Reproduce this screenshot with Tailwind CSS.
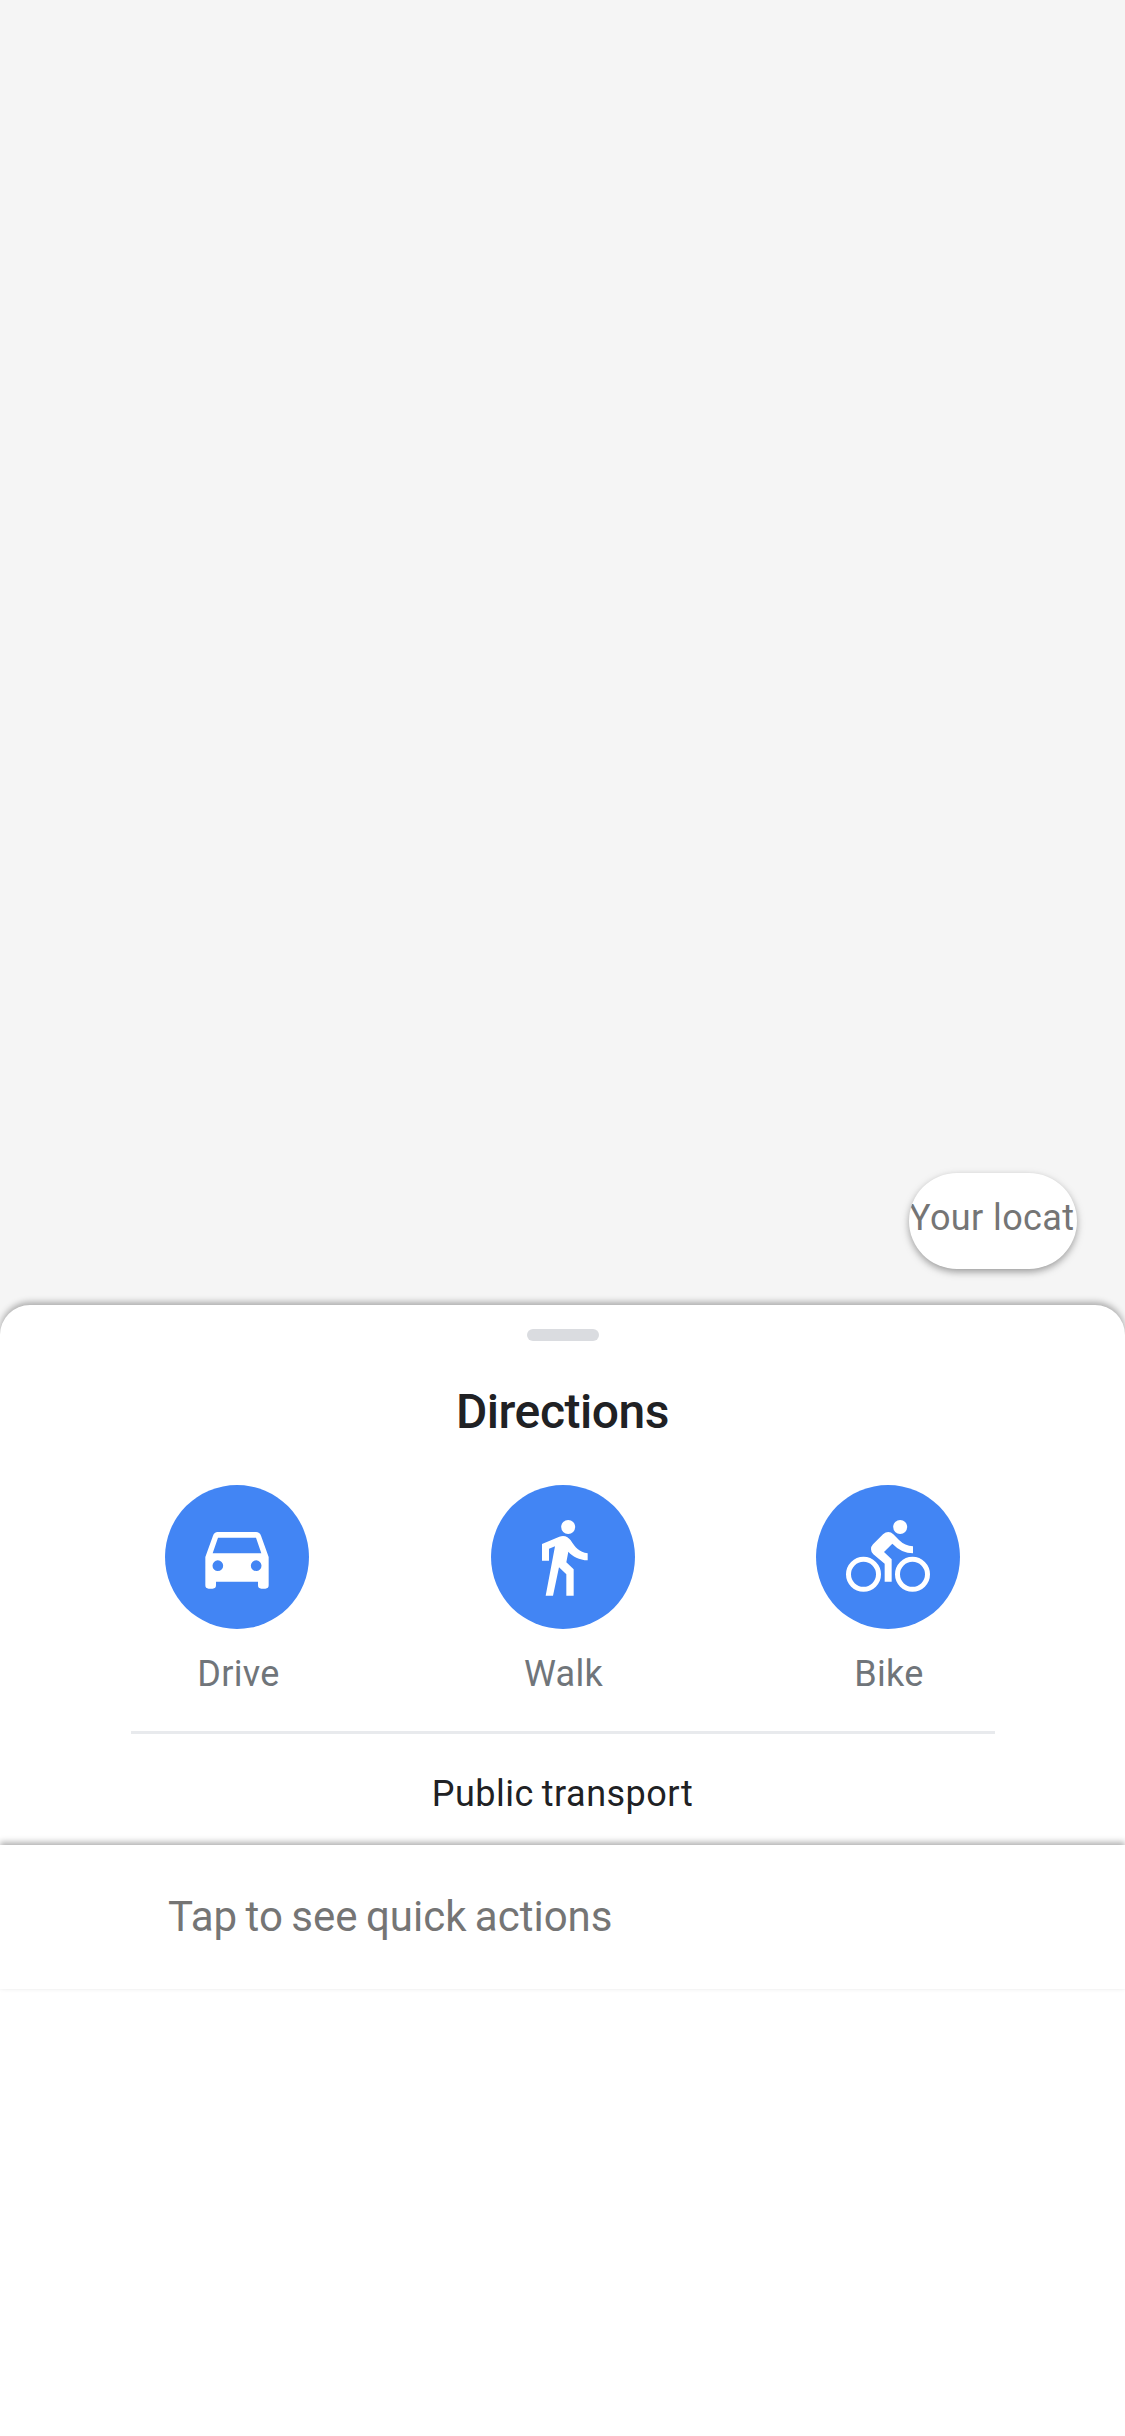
<!DOCTYPE html>
<html lang="en">
<head>
<meta charset="utf-8">
<title>Directions</title>
<script src="https://cdn.jsdelivr.net/npm/@tailwindcss/browser@4"></script>
</head>
<body class="flex h-[2436px] w-[1125px] flex-col overflow-hidden bg-white font-[Roboto,sans-serif]">
  <main class="flex h-[1845px] flex-col bg-[#f5f5f5]">
    <div class="flex h-[1305px] items-end justify-end pr-12 pb-9">
      <button class="flex h-24 w-[168px] items-center overflow-hidden rounded-full bg-white text-left text-[36px] leading-[42px] tracking-[0.4px] whitespace-nowrap text-[#757575] shadow-[0_3px_12px_-3px_rgba(0,0,0,0.3),0_3px_6px_rgba(0,0,0,0.2)]"><span class="-mt-1.5">Your locat</span></button>
    </div>
    <section class="flex h-[540px] flex-col items-center rounded-t-[30px] bg-white pt-6 shadow-[0_-3px_6px_rgba(0,0,0,0.3)]">
      <div class="h-3 w-[72px] rounded-full bg-[#dadce0]"></div>
      <h1 class="mt-[41px] text-[48px] leading-[60px] font-medium tracking-[-0.45px] text-[#202124]">Directions</h1>
      <nav class="mt-[43px] flex w-[795px] justify-between text-[36px] leading-[48px] tracking-[0.3px] text-[#70757a]">
        <a class="flex w-36 flex-col items-center gap-[21px]">
          <svg class="size-36" viewBox="45 45 432 432">
            <circle cx="261" cy="261" r="216" fill="#4285f4"/>
            <path fill="#fff" fill-rule="evenodd" d="M203 186H318Q329 186 333 197L356 261V346Q356 356 346 356H334Q324 356 324 346V335H198V346Q198 356 188 356H176Q166 356 166 346V261L189 197Q193 186 203 186ZM204 203L188 250H334L318 203ZM203.500 271A16 16 0 1 0 203.500 303A16 16 0 1 0 203.500 271ZM318.500 271A16 16 0 1 0 318.500 303A16 16 0 1 0 318.500 271Z"/>
          </svg>
          <span class="pl-[3px]">Drive</span>
        </a>
        <a class="flex w-36 flex-col items-center gap-[21px]">
          <svg class="size-36" viewBox="48 45 432 432">
            <circle cx="264" cy="261" r="216" fill="#4285f4"/>
            <circle cx="279.500" cy="171" r="21" fill="#fff"/>
            <path fill="#fff" d="M201 222L253 200C267 194 280 200 287 211C300 232 313 247 338 250V271C313 270 292 259 280 245L274 277L296 298V377H274V313L252 292L234 377H212L240 229L222 236V272H201Z"/>
          </svg>
          <span class="pl-0.5">Walk</span>
        </a>
        <a class="flex w-36 flex-col items-center gap-[21px]">
          <svg class="size-36" viewBox="48 45 432 432">
            <circle cx="264" cy="261" r="216" fill="#4285f4"/>
            <circle cx="300.500" cy="171" r="21" fill="#fff"/>
            <g fill="none" stroke="#fff" stroke-width="15">
              <circle cx="190.500" cy="313" r="45"/>
              <circle cx="337.500" cy="313" r="45"/>
            </g>
            <path fill="#fff" d="M219 223L249 193Q257 186 265 186Q273 186 280 193L297 210Q315 228 339 229V250Q305 250 277 221L252 246L275 268V335H254V281L220 253Q213 246 213 238Q213 229 219 223Z"/>
          </svg>
          <span class="pl-0.5">Bike</span>
        </a>
      </nav>
      <div class="mt-[33px] h-[3px] w-[864px] bg-[#e8eaed]"></div>
      <p class="mt-9 text-[36px] leading-[48px] tracking-[0.5px] text-[#202124] [word-spacing:-1.5px]">Public transport</p>
    </section>
  </main>
  <footer class="relative flex h-36 items-center bg-white pl-[168px] text-[42px] leading-[48px] text-[#757575] shadow-[0_-3px_6px_rgba(0,0,0,0.3)] [word-spacing:-2px]">Tap to see quick actions</footer>
</body>
</html>
